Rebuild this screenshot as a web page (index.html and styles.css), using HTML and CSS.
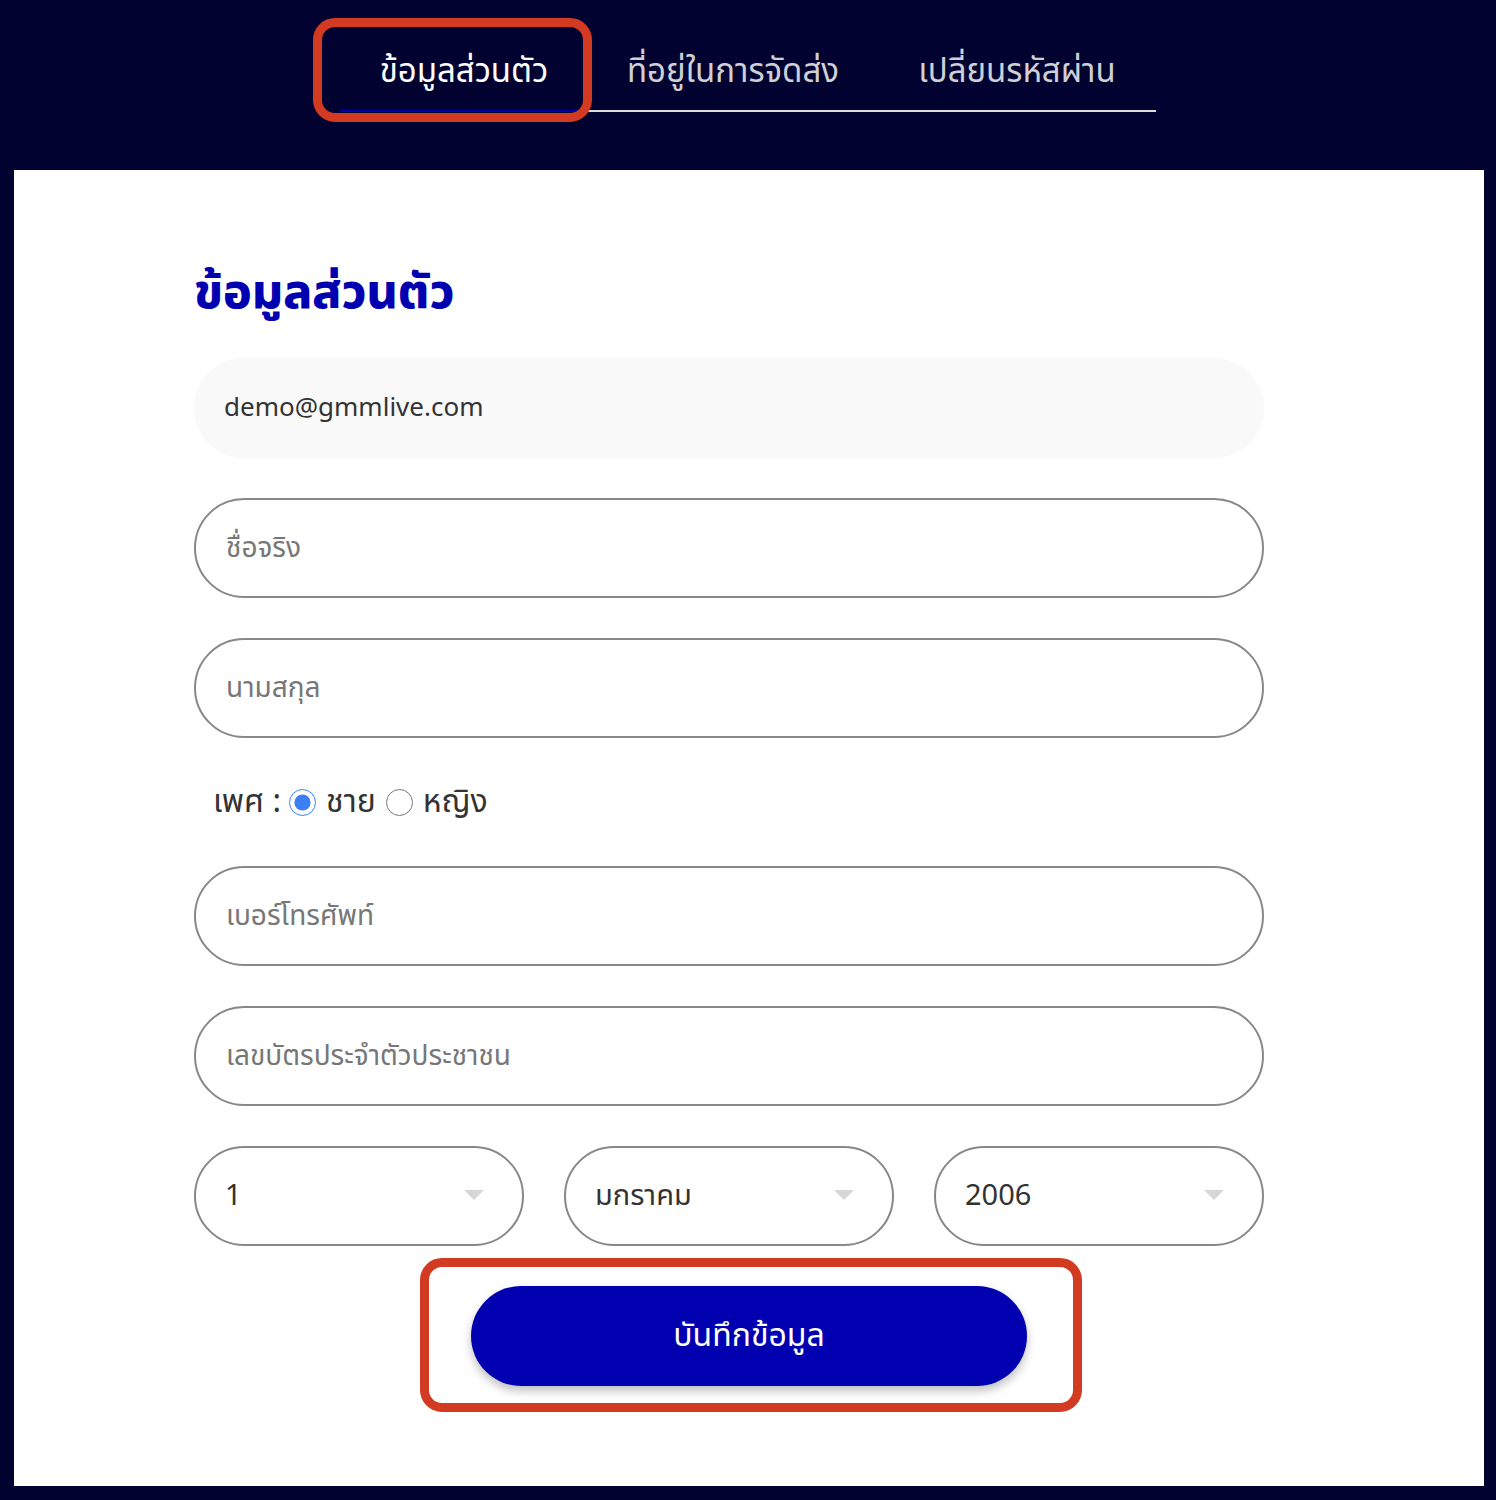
FILE: index.html
```html
<!DOCTYPE html>
<html lang="th">
  <head>
    <meta charset="UTF-8" />
    <meta name="viewport" content="width=device-width, initial-scale=1.0" />
    <title>ข้อมูลส่วนตัว</title>
    <link rel="stylesheet" href="styles.css">
  </head>
  <body>
    <header class="top-bar">
      <nav class="tabs">
        <a class="tab active" href="#">ข้อมูลส่วนตัว</a>
        <a class="tab" href="#">ที่อยู่ในการจัดส่ง</a>
        <a class="tab" href="#">เปลี่ยนรหัสผ่าน</a>
      </nav>
    </header>

    <main class="panel">
      <form class="profile-form">
        <h1 class="form-title">ข้อมูลส่วนตัว</h1>

        <div class="field field-readonly">demo@gmmlive.com</div>
        <input class="field" type="text" placeholder="ชื่อจริง" />
        <input class="field" type="text" placeholder="นามสกุล" />

        <div class="gender-row">
          <span class="gender-label">เพศ :</span>
          <label class="radio"><input type="radio" name="gender" checked /> ชาย</label>
          <label class="radio"><input type="radio" name="gender" /> หญิง</label>
        </div>

        <input class="field" type="tel" placeholder="เบอร์โทรศัพท์" />
        <input class="field" type="text" placeholder="เลขบัตรประจำตัวประชาชน" />

        <div class="birth-row">
          <div class="select-box">
            <select><option>1</option></select>
            <span class="caret"></span>
          </div>
          <div class="select-box">
            <select><option>มกราคม</option></select>
            <span class="caret"></span>
          </div>
          <div class="select-box">
            <select><option>2006</option></select>
            <span class="caret"></span>
          </div>
        </div>
      </form>

      <div class="save-row">
        <button class="save-btn" type="button">บันทึกข้อมูล</button>
      </div>
    </main>
  </body>
</html>
```

FILE: styles.css
```css
body {
  margin: 0;
  background-color: #020230;
  font-family: "Noto Sans Thai", "Noto Sans", sans-serif;
}

/* tabs */
.top-bar {
  height: 170px;
}
.tabs {
  display: flex;
  width: 816px;
  margin: 0 auto;
  padding-top: 34px;
  border-bottom: 2px solid #dddddd;
}
.tab {
  box-sizing: border-box;
  height: 78px;
  display: flex;
  align-items: center;
  justify-content: center;
  margin-bottom: -2px;
  border-bottom: 2px solid transparent;
  color: #cfcfd6;
  font-size: 33px;
  text-decoration: none;
}
.tab:nth-child(1) {
  width: 240px;
  padding-left: 8px;
}
.tab:nth-child(2) {
  width: 306px;
}
.tab:nth-child(3) {
  width: 270px;
  padding-right: 8px;
}
.tab.active {
  position: relative;
  color: #ffffff;
  border-bottom-color: #0000b0;
}
.tab.active::after {
  content: "";
  position: absolute;
  left: -27px;
  right: -12px;
  top: -16px;
  bottom: -12px;
  border: 9px solid #d33a22;
  border-radius: 22px;
}

/* panel */
.panel {
  background-color: #ffffff;
  margin: 0 12px 14px 14px;
  padding: 80px 0 100px;
}
.profile-form {
  width: 1070px;
  margin-left: 180px;
  display: flex;
  flex-direction: column;
  gap: 40px;
}
.form-title {
  margin: 0 0 -12px;
  height: 80px;
  line-height: 88px;
  font-size: 48px;
  font-weight: 800;
  color: #0000b0;
}
.field {
  box-sizing: border-box;
  height: 100px;
  padding: 0 30px;
  border: 2px solid #888888;
  border-radius: 50px;
  background: #ffffff;
  font-family: inherit;
  font-size: 28px;
  color: #333333;
  outline: none;
}
.field::placeholder {
  color: #777777;
}
.field-readonly {
  display: flex;
  align-items: center;
  border-color: transparent;
  background-color: #f9f9f9;
  padding-left: 28px;
  font-size: 26px;
}

.gender-row {
  display: flex;
  align-items: center;
  height: 48px;
  padding-left: 19px;
  font-size: 32px;
  color: #333333;
}
.gender-label {
  margin-right: 8px;
}
.radio {
  display: flex;
  align-items: center;
  gap: 10px;
  margin-right: 10px;
}
.radio input {
  width: 27px;
  height: 27px;
  margin: 0;
  accent-color: #3b7ff2;
}

.birth-row {
  display: flex;
  gap: 40px;
}
.select-box {
  position: relative;
  flex: 1;
}
.select-box select {
  appearance: none;
  width: 100%;
  height: 100px;
  padding: 0 29px;
  border: 2px solid #888888;
  border-radius: 50px;
  background: #ffffff;
  font-family: inherit;
  font-size: 29px;
  color: #333333;
}
.caret {
  position: absolute;
  right: 40px;
  top: 44px;
  border-left: 10px solid transparent;
  border-right: 10px solid transparent;
  border-top: 10px solid #d6d6d6;
}

/* save button */
.save-row {
  display: flex;
  justify-content: center;
  margin-top: 40px;
}
.save-btn {
  position: relative;
  width: 556px;
  height: 100px;
  border: none;
  border-radius: 50px;
  background-color: #0000b0;
  box-shadow: 0 5px 10px rgba(0, 0, 0, 0.25);
  color: #ffffff;
  font-family: inherit;
  font-size: 32px;
  cursor: pointer;
}
.save-btn::after {
  content: "";
  position: absolute;
  left: -51px;
  right: -55px;
  top: -28px;
  bottom: -26px;
  border: 9px solid #d33a22;
  border-radius: 22px;
}
```
